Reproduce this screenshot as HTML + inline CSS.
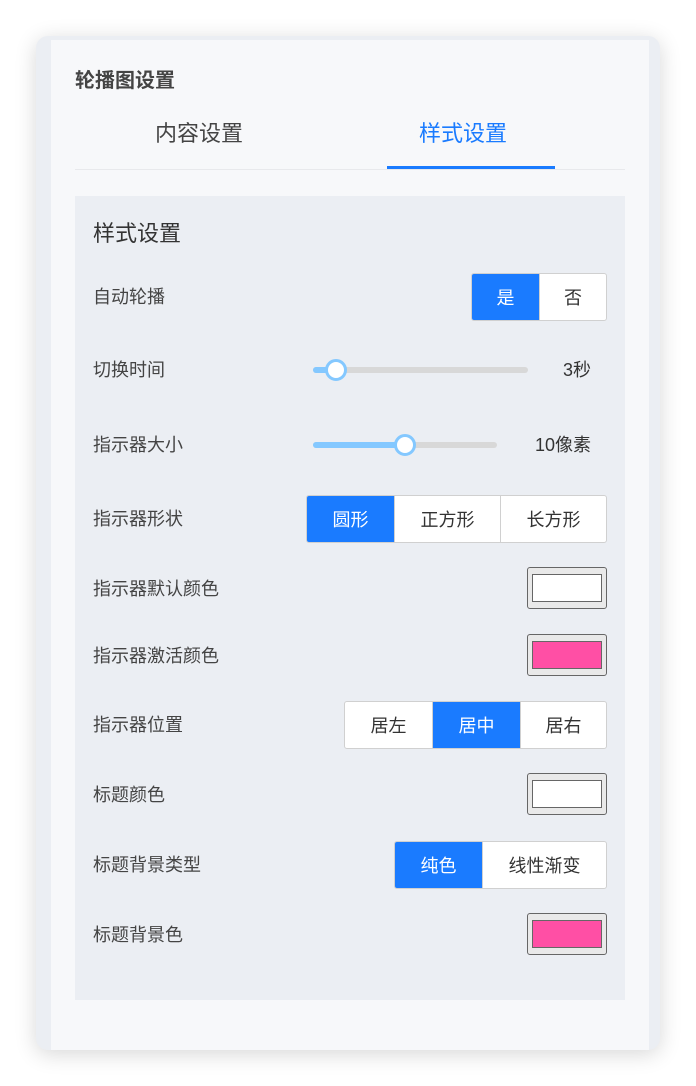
<!DOCTYPE html>
<html><head><meta charset="utf-8"><style>
*{box-sizing:border-box;margin:0;padding:0}
body{width:696px;height:1086px;background:#fff;font-family:"Liberation Sans","Noto Sans CJK SC",sans-serif;position:relative;overflow:hidden}
.a{position:absolute}
.card{left:36px;top:36px;width:624px;height:1014px;background:#ebeef3;border-radius:12px;box-shadow:0 4px 22px rgba(0,0,0,.16)}
.panel{left:51px;top:40px;width:598px;height:1010px;background:#f7f8fa}
.content{left:75px;top:196px;width:550px;height:804px;background:#ebeef3}
.lbl{left:93px;font-size:18px;color:#444;line-height:20px}
.grp{display:flex;border:1px solid #d0d0d0;border-radius:3px;overflow:hidden;background:#fff;height:48px}
.grp div{display:flex;align-items:center;justify-content:center;font-size:18px;color:#333;border-left:1px solid #d0d0d0}
.grp div:first-child{border-left:none}
.grp .on{background:#1a7bff;color:#fff}
.cp{left:527px;width:80px;height:42px;border:1px solid #666;border-radius:3px;background:#e9e9e9}
.cp i{position:absolute;left:4px;top:6px;width:70px;height:28px;border:1px solid #666;background:#fff}
.track{height:6px;border-radius:3px;background:#d8d8d8}
.fill{height:6px;border-radius:3px;background:#84c8ff;left:0;top:0}
.knob{width:22px;height:22px;border-radius:50%;background:#fff;border:3px solid #84c8ff;top:-8px}
.val{font-size:18px;color:#333;text-align:right;width:130px;left:461px;line-height:20px}
</style></head><body>
<div class="a card"></div>
<div class="a panel"></div>
<div class="a" style="left:75px;top:69px;font-size:20px;line-height:24px;font-weight:bold;color:#444">轮播图设置</div>
<div class="a" style="left:155px;top:121px;font-size:22px;line-height:26px;color:#444">内容设置</div>
<div class="a" style="left:419px;top:121px;font-size:22px;line-height:26px;color:#1a7bff">样式设置</div>
<div class="a" style="left:75px;top:169px;width:550px;height:1px;background:#e8e9ec"></div>
<div class="a" style="left:387px;top:166px;width:168px;height:3px;background:#1a7bff"></div>
<div class="a content"></div>
<div class="a" style="left:93px;top:221px;font-size:22px;line-height:26px;color:#333">样式设置</div>

<div class="a lbl" style="top:287px">自动轮播</div>
<div class="a grp" style="left:471px;top:273px;width:136px"><div class="on" style="width:67px">是</div><div style="flex:1">否</div></div>

<div class="a lbl" style="top:360px">切换时间</div>
<div class="a track" style="left:313px;top:367px;width:215px"><div class="a fill" style="width:25px"></div><div class="a knob" style="left:12px"></div></div>
<div class="a val" style="top:360px">3秒</div>

<div class="a lbl" style="top:435px">指示器大小</div>
<div class="a track" style="left:313px;top:442px;width:184px"><div class="a fill" style="width:92px"></div><div class="a knob" style="left:81px"></div></div>
<div class="a val" style="top:435px">10像素</div>

<div class="a lbl" style="top:509px">指示器形状</div>
<div class="a grp" style="left:306px;top:495px;width:301px"><div class="on" style="width:87px">圆形</div><div style="width:106px">正方形</div><div style="flex:1">长方形</div></div>

<div class="a lbl" style="top:579px">指示器默认颜色</div>
<div class="a cp" style="top:567px"><i></i></div>

<div class="a lbl" style="top:646px">指示器激活颜色</div>
<div class="a cp" style="top:634px"><i style="background:#ff4fa5"></i></div>

<div class="a lbl" style="top:715px">指示器位置</div>
<div class="a grp" style="left:344px;top:701px;width:263px"><div style="width:87px">居左</div><div class="on" style="width:88px">居中</div><div style="flex:1">居右</div></div>

<div class="a lbl" style="top:785px">标题颜色</div>
<div class="a cp" style="top:773px"><i></i></div>

<div class="a lbl" style="top:855px">标题背景类型</div>
<div class="a grp" style="left:394px;top:841px;width:213px"><div class="on" style="width:87px">纯色</div><div style="flex:1">线性渐变</div></div>

<div class="a lbl" style="top:925px">标题背景色</div>
<div class="a cp" style="top:913px"><i style="background:#ff4fa5"></i></div>
</body></html>
